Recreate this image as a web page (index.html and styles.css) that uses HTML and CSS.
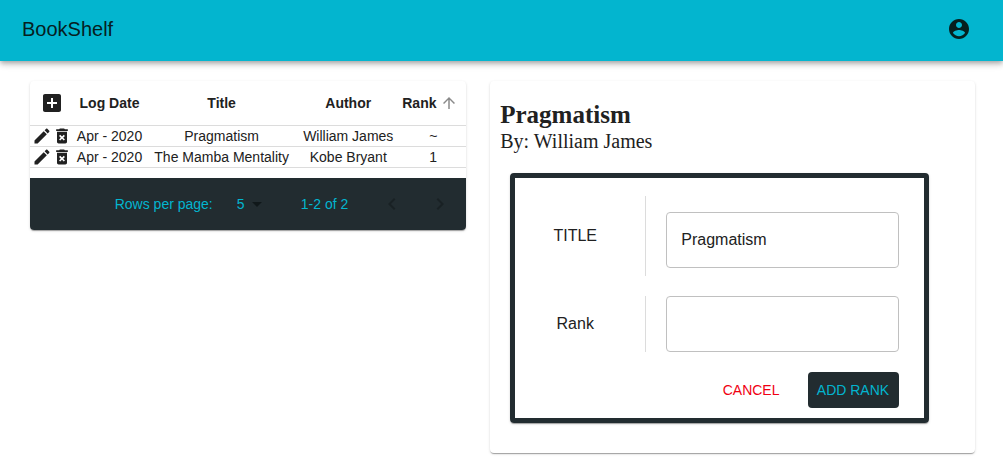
FILE: index.html
```html
<!DOCTYPE html>
<html lang="en">
<head>
<meta charset="utf-8">
<meta name="viewport" content="width=device-width, initial-scale=1">
<title>BookShelf</title>
<link rel="stylesheet" href="styles.css">
</head>
<body>
<svg class="sprite" aria-hidden="true">
  <symbol id="edit" viewBox="0 0 24 24"><path d="M3 17.25V21h3.75L17.81 9.94l-3.75-3.75L3 17.25zM20.71 7.04c.39-.39.39-1.02 0-1.41l-2.34-2.34c-.39-.39-1.02-.39-1.41 0l-1.83 1.83 3.75 3.75 1.83-1.83z"/></symbol>
  <symbol id="trash" viewBox="0 0 24 24"><path fill-rule="evenodd" d="M6 19c0 1.100.9 2 2 2h8c1.100 0 2-.9 2-2V7H6v12zm2.460-7.120l1.410-1.410L12 12.590l2.120-2.120 1.410 1.410L13.410 14l2.120 2.120-1.410 1.410L12 15.410l-2.120 2.120-1.410-1.410L10.590 14l-2.130-2.120zM15.500 4l-1-1h-5l-1 1H5v2h14V4z"/></symbol>
</svg>
<header class="app-bar">
  <h1 class="brand">BookShelf</h1>
  <button class="icon-button" type="button" aria-label="Account">
    <svg class="icon-lg" viewBox="0 0 24 24"><path d="M12 2C6.480 2 2 6.480 2 12s4.480 10 10 10 10-4.480 10-10S17.520 2 12 2zm0 3c1.660 0 3 1.340 3 3s-1.340 3-3 3-3-1.340-3-3 1.340-3 3-3zm0 14.200c-2.500 0-4.710-1.280-6-3.220.03-1.990 4-3.080 6-3.080 1.990 0 5.970 1.090 6 3.080-1.290 1.940-3.500 3.220-6 3.220z"/></svg>
  </button>
</header>
<main class="content">
  <section class="card">
    <table class="books">
      <colgroup><col class="col-actions"><col class="col-date"><col><col class="col-author"><col class="col-rank"></colgroup>
      <thead>
        <tr>
          <th><button class="icon-button" type="button" aria-label="Add book"><svg class="icon-lg" viewBox="0 0 24 24"><path d="M19 3H5c-1.110 0-2 .9-2 2v14c0 1.100.89 2 2 2h14c1.100 0 2-.9 2-2V5c0-1.100-.9-2-2-2zm-2 10h-4v4h-2v-4H7v-2h4V7h2v4h4v2z"/></svg></button></th>
          <th>Log Date</th>
          <th>Title</th>
          <th>Author</th>
          <th><button class="sort" type="button">Rank <svg class="icon-sort" viewBox="0 0 24 24"><path d="M4 12l1.410 1.410L11 7.830V20h2V7.830l5.580 5.590L20 12l-8-8-8 8z"/></svg></button></th>
        </tr>
      </thead>
      <tbody>
        <tr>
          <td><div class="actions"><button class="icon-button" type="button" aria-label="Edit"><svg class="icon-md" viewBox="0 0 24 24"><use href="#edit"/></svg></button><button class="icon-button" type="button" aria-label="Delete"><svg class="icon-md" viewBox="0 0 24 24"><use href="#trash"/></svg></button></div></td>
          <td>Apr - 2020</td><td>Pragmatism</td><td>William James</td><td>~</td>
        </tr>
        <tr>
          <td><div class="actions"><button class="icon-button" type="button" aria-label="Edit"><svg class="icon-md" viewBox="0 0 24 24"><use href="#edit"/></svg></button><button class="icon-button" type="button" aria-label="Delete"><svg class="icon-md" viewBox="0 0 24 24"><use href="#trash"/></svg></button></div></td>
          <td>Apr - 2020</td><td>The Mamba Mentality</td><td>Kobe Bryant</td><td>1</td>
        </tr>
      </tbody>
    </table>
    <div class="pager">
      <label for="rows">Rows per page:</label>
      <div class="rows-select">
        <select id="rows"><option>5</option><option>10</option></select>
        <svg class="select-arrow" viewBox="0 0 24 24"><path d="M7 10l5 5 5-5z"/></svg>
      </div>
      <span class="range">1-2 of 2</span>
      <button class="page-button" type="button" disabled aria-label="Previous page"><svg class="icon-lg" viewBox="0 0 24 24"><path d="M15.410 7.410L14 6l-6 6 6 6 1.410-1.410L10.830 12z"/></svg></button>
      <button class="page-button" type="button" disabled aria-label="Next page"><svg class="icon-lg" viewBox="0 0 24 24"><path d="M10 6L8.590 7.410 13.170 12l-4.580 4.590L10 18l6-6z"/></svg></button>
    </div>
  </section>
  <section class="card detail">
    <h2 class="book-title">Pragmatism</h2>
    <p class="book-author">By: William James</p>
    <form class="rank-form">
      <div class="field field-title">
        <label class="field-label" for="title">TITLE</label>
        <input class="field-input" id="title" type="text" value="Pragmatism">
      </div>
      <div class="field">
        <label class="field-label" for="rank">Rank</label>
        <input class="field-input" id="rank" type="text">
      </div>
      <div class="form-actions">
        <button class="button button-cancel" type="button">CANCEL</button>
        <button class="button button-primary" type="button">ADD RANK</button>
      </div>
    </form>
  </section>
</main>
</body>
</html>
```
FILE: styles.css
```css
:root {
  --accent: #03b5cf;
  --dark: #222c30;
  --text: #212121;
  --line: #dcdcdc;
}

* {
  box-sizing: border-box;
}

body {
  margin: 0;
  background: #fff;
  color: var(--text);
  font: 14px/20px "Liberation Sans", Arial, sans-serif;
}

button,
input,
select {
  font: inherit;
  color: inherit;
}

svg {
  display: block;
  fill: currentColor;
}

.sprite {
  position: absolute;
  width: 0;
  height: 0;
}

.icon-sort {
  width: 18px;
  height: 18px;
  fill: #8a8a8a;
}

.icon-md {
  width: 20px;
  height: 20px;
}

.icon-lg {
  width: 24px;
  height: 24px;
}

.icon-button {
  display: block;
  padding: 0;
  border: 0;
  background: none;
}

.app-bar {
  display: flex;
  align-items: center;
  justify-content: space-between;
  min-height: 61px;
  padding: 0 32px 4px 22px;
  background: var(--accent);
  color: #06201f;
  box-shadow: 0 2px 4px -1px rgba(0, 0, 0, .2), 0 4px 5px rgba(0, 0, 0, .14), 0 1px 10px rgba(0, 0, 0, .12);
}

.brand {
  margin: 0;
  font-size: 20px;
  line-height: 32px;
  font-weight: 400;
}

.content {
  display: grid;
  grid-template-columns: 9fr 10fr;
  align-items: start;
  gap: 24px;
  padding: 20px 28px 10px 30px;
}

.card {
  overflow: hidden;
  border-radius: 4px;
  background: #fff;
  box-shadow: 0 2px 1px -1px rgba(0, 0, 0, .2), 0 1px 1px rgba(0, 0, 0, .14), 0 1px 3px rgba(0, 0, 0, .12);
}

.books {
  width: 100%;
  margin-bottom: 10px;
  table-layout: fixed;
  border-spacing: 0;
}

.col-actions {
  width: 42px;
}

.col-date {
  width: 75px;
}

.col-author {
  width: 104px;
}

.col-rank {
  width: 66px;
}

.books th,
.books td {
  padding: 0;
  border-bottom: 1px solid var(--line);
  text-align: center;
  white-space: nowrap;
}

.books th {
  height: 45px;
}

.books th .icon-button {
  margin-left: 10px;
}

.sort {
  display: flex;
  align-items: center;
  gap: 4px;
  margin-left: 2px;
  padding: 0;
  border: 0;
  background: none;
}

.actions {
  display: flex;
  padding-left: 2px;
}

.pager {
  display: flex;
  align-items: center;
  justify-content: flex-end;
  min-height: 52px;
  padding-right: 2px;
  background: var(--dark);
  color: var(--accent);
}

.rows-select {
  display: grid;
  align-items: center;
  justify-items: end;
  width: 48px;
  margin: 0 32px 0 8px;
}

.rows-select > * {
  grid-area: 1 / 1;
}

.rows-select select {
  width: 100%;
  padding: 0 0 0 16px;
  border: 0;
  background: none;
  appearance: none;
}

.select-arrow {
  width: 24px;
  height: 24px;
  fill: #10181a;
  pointer-events: none;
}

.range {
  margin-right: 20px;
}

.page-button {
  padding: 12px;
  border: 0;
  background: none;
  color: #192124;
}

.detail {
  padding: 20px 10px 30px;
}

.book-title,
.book-author {
  margin: 0;
  font-family: "Liberation Serif", "Times New Roman", serif;
}

.book-title {
  font-size: 25px;
  line-height: 28px;
}

.book-author {
  font-size: 20px;
  line-height: 24px;
}

.rank-form {
  display: grid;
  gap: 20px;
  width: 90%;
  margin: 20px 10px 0;
  padding: 18px 25px 10px 0;
  border: 5px solid var(--dark);
  border-radius: 4px;
  font-size: 16px;
  box-shadow: 0 2px 1px -1px rgba(0, 0, 0, .2), 0 1px 1px rgba(0, 0, 0, .14), 0 1px 3px rgba(0, 0, 0, .12);
}

.field {
  display: grid;
  grid-template-columns: 131px 1fr;
  gap: 20px;
}

.field-label {
  display: flex;
  align-items: center;
  justify-content: center;
  padding-right: 10px;
  border-right: 1px solid var(--line);
}

.field-input {
  width: 100%;
  height: 56px;
  padding: 0 14px;
  border: 1px solid #c0c0c0;
  border-radius: 4px;
  background: #fff;
}

.field-title .field-input {
  margin: 16px 0 8px;
}

.form-actions {
  display: flex;
  justify-content: flex-end;
  gap: 20px;
}

.button {
  height: 36px;
  padding: 0 8px;
  border: 0;
  border-radius: 4px;
  background: none;
  font-size: 14px;
}

.button-cancel {
  color: #f00012;
}

.button-primary {
  min-width: 91px;
  background: var(--dark);
  color: var(--accent);
}
```
